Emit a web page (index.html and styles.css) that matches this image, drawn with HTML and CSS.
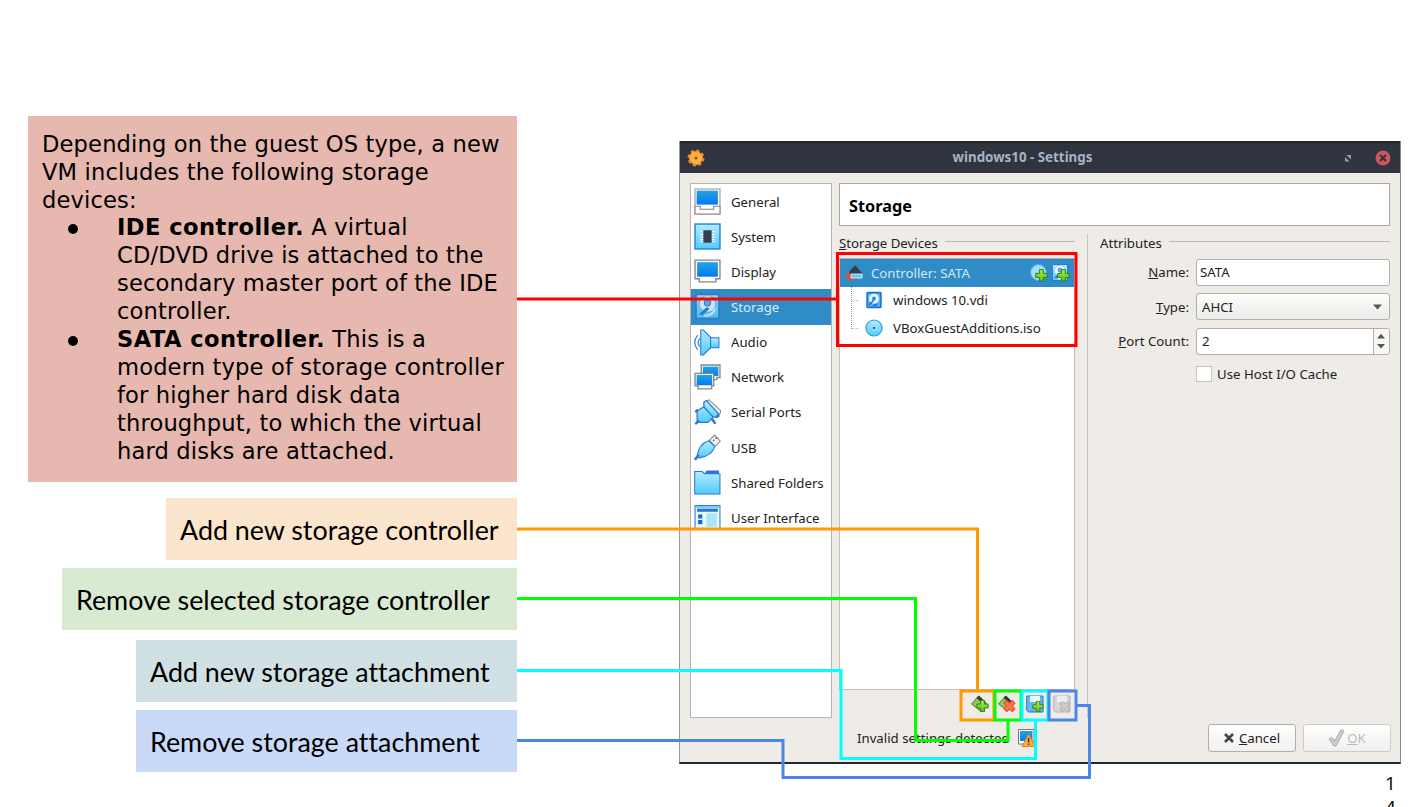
FILE: index.html
```html
<!DOCTYPE html>
<html lang="en">
<head>
<meta charset="utf-8">
<title>windows10 - Settings</title>
<link rel="stylesheet" href="styles.css">
</head>
<body>
<svg class="defs" width="0" height="0">
  <defs>
    <linearGradient id="screen" x1="0" y1="0" x2="0" y2="1"><stop offset="0" stop-color="#22a4e4"/><stop offset="1" stop-color="#0279f3"/></linearGradient>
    <linearGradient id="sky" x1="0" y1="0" x2="0" y2="1"><stop offset="0" stop-color="#b3edff"/><stop offset="1" stop-color="#52cbfb"/></linearGradient>
    <linearGradient id="lime" x1="0" y1="0" x2="0" y2="1"><stop offset="0" stop-color="#a5ed4a"/><stop offset="1" stop-color="#5dc21c"/></linearGradient>
    <symbol id="disk" viewBox="0 0 26 26"><rect x="2" y="1.500" width="22" height="23" rx="1.500" fill="url(#sky)" stroke="#2878d0" stroke-width="1.500"/><circle cx="13" cy="10.500" r="8" fill="#f4fbff" stroke="#6db6ea"/><circle cx="13" cy="9.500" r="3" fill="#55b6ef" stroke="#247bd0"/><path d="M4.500 20.500 12.500 13.500 15 15.500 8 21.500Z" fill="#2a79ce"/><path d="M20 15C19 20 15 22 10 22" fill="none" stroke="#e4f5ff" stroke-width="2"/></symbol>
    <symbol id="plus" viewBox="0 0 12 12"><path d="M4.200.8h3.600v3.400h3.400v3.600H7.800v3.400H4.200V7.800H.8V4.200h3.400Z" fill="url(#lime)" stroke="#32810d" stroke-width=".9"/></symbol>
    <symbol id="cross" viewBox="0 0 12 12"><path d="M3.500 1 6 3.300 8.500 1 11 3.500 8.700 6 11 8.500 8.500 11 6 8.700 3.500 11 1 8.500 3.300 6 1 3.500Z" fill="#ff7650" stroke="#e34b28"/></symbol>
  </defs>
</svg>

<main class="slide">
  <section class="notes">
    <div class="note note-intro">
      <p>Depending on the guest OS type, a new<br>VM includes the following storage<br>devices:</p>
      <ul>
        <li><b>IDE controller.</b> A virtual<br>CD/DVD drive is attached to the<br>secondary master port of the IDE<br>controller.</li>
        <li><b>SATA controller.</b> This is a<br>modern type of storage controller<br>for higher hard disk data<br>throughput, to which the virtual<br>hard disks are attached.</li>
      </ul>
    </div>
    <div class="note label label-orange">Add new storage controller</div>
    <div class="note label label-green">Remove selected storage controller</div>
    <div class="note label label-teal">Add new storage attachment</div>
    <div class="note label label-blue">Remove storage attachment</div>
  </section>

  <section class="window">
    <header class="titlebar">
      <svg class="gear" viewBox="0 0 18 18"><circle cx="9" cy="9" r="7" fill="none" stroke="#e9822e" stroke-width="3" stroke-dasharray="3.200 2.300"/><circle cx="9" cy="9" r="6.500" fill="#fbb33d" stroke="#f0942e"/><circle cx="9" cy="9" r="1.600" fill="#a04b12"/></svg>
      <span class="title">windows10 - Settings</span>
      <svg class="max" viewBox="0 0 8 8"><path d="M2.500 1H7V5.500ZM1 3V7.500H5.500Z" fill="#9a9ea6"/></svg>
      <svg class="close" viewBox="0 0 16 16"><circle cx="8" cy="8" r="7.500" fill="#cc575d"/><path d="m5 5 6 6m0-6-6 6" stroke="#2f343f" stroke-width="2"/></svg>
    </header>
    <div class="content">
      <nav class="sidebar">
        <div class="item"><svg viewBox="0 0 26 26"><path d="M1 1H25V25H1Z" fill="#fff" stroke="#909090"/><path d="M2.500 2.500H23V16H2.500Z" fill="url(#screen)"/><path d="M1 17.500H6V20.500H19V17.500H25V25H1Z" fill="#fff" stroke="#858585"/></svg><span class="t">General</span></div>
        <div class="item"><svg viewBox="0 0 26 26"><rect x="1" y="1" width="24" height="24" fill="url(#sky)" stroke="#2385e0" stroke-width="1.400"/><path d="M6 8.500H20M6 11H20M6 13.500H20M6 16H20M6 18H20" stroke="#fff"/><rect x="9" y="7" width="8" height="12" fill="#333e51"/></svg><span class="t">System</span></div>
        <div class="item"><svg viewBox="0 0 26 26"><path d="M1 2H25V20H21V23H5V20H1Z" fill="#fff" stroke="#858585" stroke-width="1.300"/><path d="M3 4H23V18H3Z" fill="url(#screen)"/></svg><span class="t">Display</span></div>
        <div class="item selected"><svg viewBox="0 0 26 26" opacity=".8"><use href="#disk"/></svg><span class="t">Storage</span></div>
        <div class="item"><svg viewBox="0 0 26 26"><path d="M3.500 6Q-2 13 3.500 20M5.500 9Q2.500 13 5.500 17" fill="none" stroke="#3789d6" stroke-width="1.200"/><path d="M15 8.500H24V18H15Z" fill="url(#sky)" stroke="#2878d0"/><path d="M6.500 1H9L16 8V18L9 25H6.500Z" fill="url(#sky)" stroke="#2878d0"/></svg><span class="t">Audio</span></div>
        <div class="item"><svg viewBox="0 0 26 26"><path d="M7 1H25V13H22V15H10V13H7Z" fill="#fff" stroke="#858585" stroke-width="1.300"/><path d="M8.500 2.500H23.500V11.500H8.500Z" fill="url(#screen)"/><path d="M1 9H19V21H17V24H4V21H1Z" fill="#fff" stroke="#858585" stroke-width="1.300"/><path d="M2.500 10.500H17.500V20.500H2.500Z" fill="url(#screen)"/></svg><span class="t">Network</span></div>
        <div class="item"><svg viewBox="0 0 26 26"><path d="M12 2 14.500 .800 25.500 11V13.500L22.500 15Z" fill="#f2f2f2" stroke="#888"/><path d="M9.500 3 12 1.500 24 14.500 22 17.500H18.500L13.500 22.500H5L3 20.500V11.500L9.500 7.500Z" fill="url(#sky)" stroke="#2878d0" stroke-width="1.200" stroke-linejoin="round"/><path d="M9.500 7.500 18.500 17.500" stroke="#2878d0" stroke-width="1.200"/><path d="M4 21.500 2 23.500M3 11 2 12M22 17 23.500 16M17.500 19.500 20 23" stroke="#2878d0" stroke-width="2.400" stroke-linecap="round"/></svg><span class="t">Serial Ports</span></div>
        <div class="item"><svg viewBox="0 0 26 26"><path d="m15 6 5-5 5.300 6-5 5Z" fill="#f5f5f5" stroke="#888"/><path d="m18.500 5.500 1 1m1.500-3 1 1" stroke="#555" stroke-width="1.500"/><path d="M14 6.500 20 12C18 19 12 22 5 23L3 21C4 14 7 9 14 6.500Z" fill="url(#sky)" stroke="#2878d0"/><path d="m4 21-2.500 3" stroke="#2878d0" stroke-width="2.500" stroke-linecap="round"/></svg><span class="t">USB</span></div>
        <div class="item"><svg viewBox="0 0 26 26"><path d="M10 5 12 1.500H24V8H10Z" fill="#2774d0"/><path d="M.700 2.500H8L10 4.500H25V24H.700Z" fill="url(#sky)" stroke="#2878d0"/></svg><span class="t">Shared Folders</span></div>
        <div class="item"><svg viewBox="0 0 26 26"><rect x="1" y="1.500" width="24" height="23" fill="#e3f8ff" stroke="#2878d0"/><path d="M2 2H24V4H2Z" fill="#72cdf8"/><path d="M3 4.500H23V7.500H3Z" fill="#2878d0"/><path d="M4 10H8V14H4ZM4 15.500H8V19.500H4Z" fill="#1668cf"/><rect x="12" y="9" width="10" height="13" fill="#abe5fb"/></svg><span class="t">User Interface</span></div>
      </nav>
      <div class="main">
        <h1 class="page-title">Storage</h1>
        <div class="panes">
          <div class="devices">
            <h2 class="group"><span class="t"><u>S</u>torage Devices</span></h2>
            <div class="tree">
              <div class="controller">
                <svg class="chip" viewBox="0 0 18 18"><path d="m0 12 6-6 5 8-6 3Z" fill="#d95237"/><path d="m4 8 6-7 7 8-2 4-8 1Z" fill="#363f49"/><path d="M6 10H17V14H6Z" fill="#68c8fb" stroke="#e2f6ff" stroke-width=".8"/></svg>
                <span class="t">Controller: SATA</span>
                <svg class="add" viewBox="0 0 17 17"><circle cx="8" cy="8" r="7.500" fill="#a4ddfa" stroke="#4ba8e4"/><use href="#plus" x="4.500" y="4.500" width="12.500" height="12.500"/></svg>
                <svg class="add" viewBox="0 0 17 17"><use href="#disk" x="-1" y="-.5" width="17" height="17"/><use href="#plus" x="4.500" y="4.500" width="12.500" height="12.500"/></svg>
              </div>
              <div class="leaf"><i class="branch"></i><svg viewBox="0 0 18 18"><rect x="2" y="1.500" width="14" height="15" rx="1" fill="#4cb2f5" stroke="#1669d1" stroke-width="1.400"/><circle cx="9" cy="7.800" r="5" fill="#eefaff"/><circle cx="9" cy="7.500" r="1.900" fill="#238bea"/><path d="m4 14 5-5m3 4-4 2" stroke="#1669d1" stroke-width="1.500"/></svg><span class="t">windows 10.vdi</span></div>
              <div class="leaf last"><i class="branch"></i><svg viewBox="0 0 18 18"><circle cx="9" cy="9" r="8" fill="url(#sky)" stroke="#3995df" stroke-width="1.200"/><circle cx="9" cy="9" r="2.500" fill="#a9e6ff"/><circle cx="9" cy="9" r="1.300" fill="#1865bd"/></svg><span class="t">VBoxGuestAdditions.iso</span></div>
            </div>
            <div class="tools">
              <svg viewBox="0 0 18 18"><path d="m.5 9 7-8 8 8-6 7Z" fill="#8cc653" stroke="#547f2b"/><path d="m5.500 3 2.500-2.500 7 7-2 2Z" fill="#333b32"/><use href="#plus" x="5" y="4.500" width="13" height="13"/></svg>
              <svg viewBox="0 0 18 18"><path d="m.5 9 7-8 8 8-6 7Z" fill="#8cc653" stroke="#547f2b"/><path d="m5.500 3 2.500-2.500 7 7-2 2Z" fill="#333b32"/><use href="#cross" x="5" y="4.500" width="13" height="13"/></svg>
              <svg viewBox="0 0 18 18"><path d="M.700 1H17V17H2.500L.700 15Z" fill="#64b8f1" stroke="#2674cc"/><path d="M4 1H14V7H4Z" fill="#eaf8ff"/><use href="#plus" x="6" y="5.500" width="12" height="12"/></svg>
              <svg viewBox="0 0 18 18"><path d="M.700 1H17V17H2.500L.700 15Z" fill="#d6d6d6" stroke="#b4b4b4"/><path d="M4 1H14V7H4Z" fill="#ececec"/><g class="gray"><use href="#cross" x="6" y="5.500" width="12" height="12"/></g></svg>
            </div>
          </div>
          <div class="divider"></div>
          <div class="attributes">
            <h2 class="group"><span class="t">Attributes</span></h2>
            <div class="form">
              <label><u>N</u>ame:</label><div class="field">SATA</div>
              <label><u>T</u>ype:</label><div class="field select"><span>AHCI</span><svg viewBox="0 0 10 6"><path d="M0 .5H9L4.500 5.500Z" fill="#555"/></svg></div>
              <label><u>P</u>ort Count:</label><div class="field spin"><span>2</span><div class="steps"><svg viewBox="0 0 10 16"><path d="M1 5.500H9L5 .800ZM1 11H9L5 15.500Z" fill="#555"/></svg></div></div>
              <div class="check"><i></i><span>Use Host I/O Cache</span></div>
            </div>
          </div>
        </div>
      </div>
    </div>
    <footer class="footer">
      <div class="status"><span class="t">Invalid settings detected</span><svg viewBox="0 0 18 18"><path d="M.500.500H16V13H14V15H.500Z" fill="#fff" stroke="#777"/><path d="M2 2H14.500V12H2Z" fill="url(#screen)"/><path d="m10.500 5 7 12.500H4Z" fill="#ffad38" stroke="#d9822b"/><path d="M10.600 9v4.500m0 1v1.500" stroke="#4c3521" stroke-width="1.500"/></svg></div>
      <div class="button"><svg viewBox="0 0 10 10"><path d="m1 1 8 8M9 1 1 9" stroke="#444" stroke-width="2.600"/></svg><span><u>C</u>ancel</span></div>
      <div class="button disabled"><svg viewBox="0 0 17 18"><path d="m1 10 3-1.500L6.500 12 13 .800 16 2 8 17H6Z" fill="#ccc" stroke="#aaa"/></svg><span><u>O</u>K</span></div>
    </footer>
  </section>
  <div class="page-number">1<br>4</div>

  <svg class="connectors" viewBox="0 0 1416 807" fill="none" stroke-width="3">
    <path d="M517 299H837" stroke="#f00"/><rect x="837.500" y="253.500" width="238.500" height="92" stroke="#f00"/>
    <path d="M517 529H977.500V690" stroke="#ff9900"/><rect x="961" y="691" width="33" height="29" stroke="#ff9900"/>
    <path d="M517 598.500H915.500V740.500H1008V721" stroke="#0f0"/><rect x="995" y="691" width="26" height="29" stroke="#0f0"/>
    <path d="M517 670.500H841V758.500H1035.500V721" stroke="#0ff"/><rect x="1022" y="691" width="26" height="29" stroke="#0ff"/>
    <path d="M517 740.500H783V777.500H1089.500V705.500H1077" stroke="#4a86e8"/><rect x="1049" y="691" width="27" height="29" stroke="#4a86e8"/>
  </svg>
</main>
</body>
</html>
```
FILE: styles.css
```css
* { box-sizing: border-box; }
body { margin: 0; background: #fff; color: #000; overflow: hidden; }
svg { display: block; flex: none; }
.defs { position: absolute; }
.t { white-space: nowrap; }

.slide { position: relative; width: 1416px; height: 807px; display: grid; grid-template-columns: 489px 722px; column-gap: 162px; padding-left: 28px; align-content: start; overflow: hidden; }
.notes { display: flex; flex-direction: column; align-items: flex-end; padding-top: 116px; }
.note-intro { width: 489px; height: 366px; margin-bottom: 16px; padding: 14.600px 14px 0; background: #e6b8af; font: 22.600px/27.950px "DejaVu Sans", sans-serif; letter-spacing: .15px; white-space: nowrap; }
.note-intro p, .note-intro ul { margin: 0; }
.note-intro ul { padding: 0; list-style: none; }
.note-intro b { letter-spacing: .45px; }
.note-intro li { position: relative; padding-left: 75px; }
.note-intro li::before { content: ""; position: absolute; left: 26px; top: 10px; width: 10px; height: 10px; border-radius: 50%; background: #000; }
.label { height: 62px; padding: 2px 0 0 14px; display: flex; align-items: center; font: 26.850px/32px Lato, sans-serif; font-variant-ligatures: none; white-space: nowrap; }
.label-orange { width: 351px; background: #fce5cd; margin-bottom: 7.500px; }
.label-green { width: 455px; background: #d9ead3; margin-bottom: 10px; }
.label-teal { width: 381px; background: #d0e0e3; margin-bottom: 8px; }
.label-blue { width: 381px; background: #c9daf8; }

.window { margin-top: 141px; height: 623px; display: flex; flex-direction: column; background: #efebe7; border-left: 1px solid #999; border-right: 1px solid #888; border-bottom: 2px solid #20272d; font: 13.230px/18px "Noto Sans", sans-serif; color: #222; }
.titlebar { height: 32px; display: flex; align-items: center; background: #2f343f; border-top: 2px solid #20252c; color: #a8b3c4; padding: 0 9px 1px 7px; }
.gear { width: 18px; height: 18px; }
.title { flex: 1; text-align: center; font-weight: 700; font-size: 13.350px; padding: 0 4px 1px 0; }
.max { width: 8px; height: 8px; margin-right: 23px; }
.close { width: 16px; height: 16px; }
.content { display: grid; grid-template-columns: 142px 551px; column-gap: 7px; padding: 10px 10px 0 10px; height: 547px; }
.sidebar { height: 535px; background: #fff; border: 1px solid #b8b5b1; }
.item { height: 35.150px; display: flex; align-items: center; gap: 10px; padding-left: 3px; }
.item svg { width: 27px; height: 27px; }
.selected { background: #308cc6; color: #dcecf5; }
.page-title { margin: 0; height: 43px; background: #fff; border: 1px solid #a9a6a2; padding: 2px 9px 0; display: flex; align-items: center; font-size: 16.300px; color: #000; }
.panes { display: flex; margin-top: 7.500px; height: 484px; }
.devices { width: 236px; }
.group { margin: 0; display: flex; align-items: center; gap: 7px; height: 18px; font-size: inherit; font-weight: 400; }
.group::after { content: ""; flex: 1; height: 1px; background: #bdb9b5; margin-bottom: 3px; }
.tree { height: 432px; margin: 6.500px 0 0; background: #fff; border: 1px solid #c2bfbb; border-top-color: #aaa; }
.controller { height: 28px; display: flex; align-items: center; background: #308cc6; color: #d3e6f2; padding-left: 5px; }
.chip { width: 18px; height: 18px; margin-right: 8px; }
.controller .t { width: 159px; }
.add { width: 18px; height: 18px; margin-right: 4px; }
.leaf { height: 27.500px; display: flex; align-items: center; padding-bottom: 1px; }
.leaf svg { width: 18px; height: 18px; margin-right: 10px; }
.branch { width: 9px; height: 100%; margin: 0 5px 0 11px; border-left: 1px dotted #999; background: linear-gradient(90deg, #bbb 50%, transparent 0) 0 50% / 2px 1px repeat-x; }
.last .branch { height: 14px; align-self: flex-start; background-position: 0 100%; }
.tools { display: flex; gap: 9.500px; justify-content: flex-end; padding: 5px 4px 0 0; }
.tools svg { width: 18px; height: 18px; }
.gray { filter: grayscale(1) brightness(1.35); opacity: .55; }
.divider { width: 2px; background: #c8c4c0; margin: 0 12px; }
.attributes { width: 290px; }
.form { display: grid; grid-template-columns: 89px 194px; column-gap: 7px; row-gap: 7.500px; margin-top: 7px; }
.form label { text-align: right; align-self: center; }
.field { height: 27px; border: 1px solid #b2afab; border-radius: 3px; background: #fff; display: flex; align-items: center; padding-left: 3px; }
.select { background: linear-gradient(#fdfdfd, #ebebe9); justify-content: space-between; padding: 0 6px 0 5px; }
.select svg { width: 10px; height: 6px; }
.spin { justify-content: space-between; padding-left: 5px; }
.steps { height: 100%; width: 16px; border-left: 1px solid #b2afab; background: #f8f7f6; padding: 4px 2px; border-radius: 0 3px 3px 0; }
.steps svg { width: 10px; height: 16px; }
.check { grid-column: 2; display: flex; align-items: center; gap: 5px; margin-top: 2.500px; }
.check i { width: 16px; height: 16px; background: #fff; border: 1px solid #c8c5c1; }
.footer { display: flex; padding: 4px 9px 0 0; }
.status { flex: 1; display: flex; gap: 8px; padding: 5px 0 0 177px; }
.status svg { width: 18px; height: 18px; }
.button { width: 88px; height: 28px; border: 1px solid #b2afab; border-radius: 3px; background: linear-gradient(#fefefe, #f1f0ef); display: flex; align-items: center; justify-content: center; gap: 5px; margin-left: 7px; }
.button svg { width: 10px; height: 10px; }
.button.disabled { color: #bbb; border-color: #cfccc8; gap: 2px; }
.disabled svg { width: 17px; height: 18px; }
.page-number { position: absolute; left: 1385px; top: 771px; font: 19px/24px "Open Sans", sans-serif; }
.connectors { position: absolute; left: 0; top: 0; width: 1416px; height: 807px; }
```
